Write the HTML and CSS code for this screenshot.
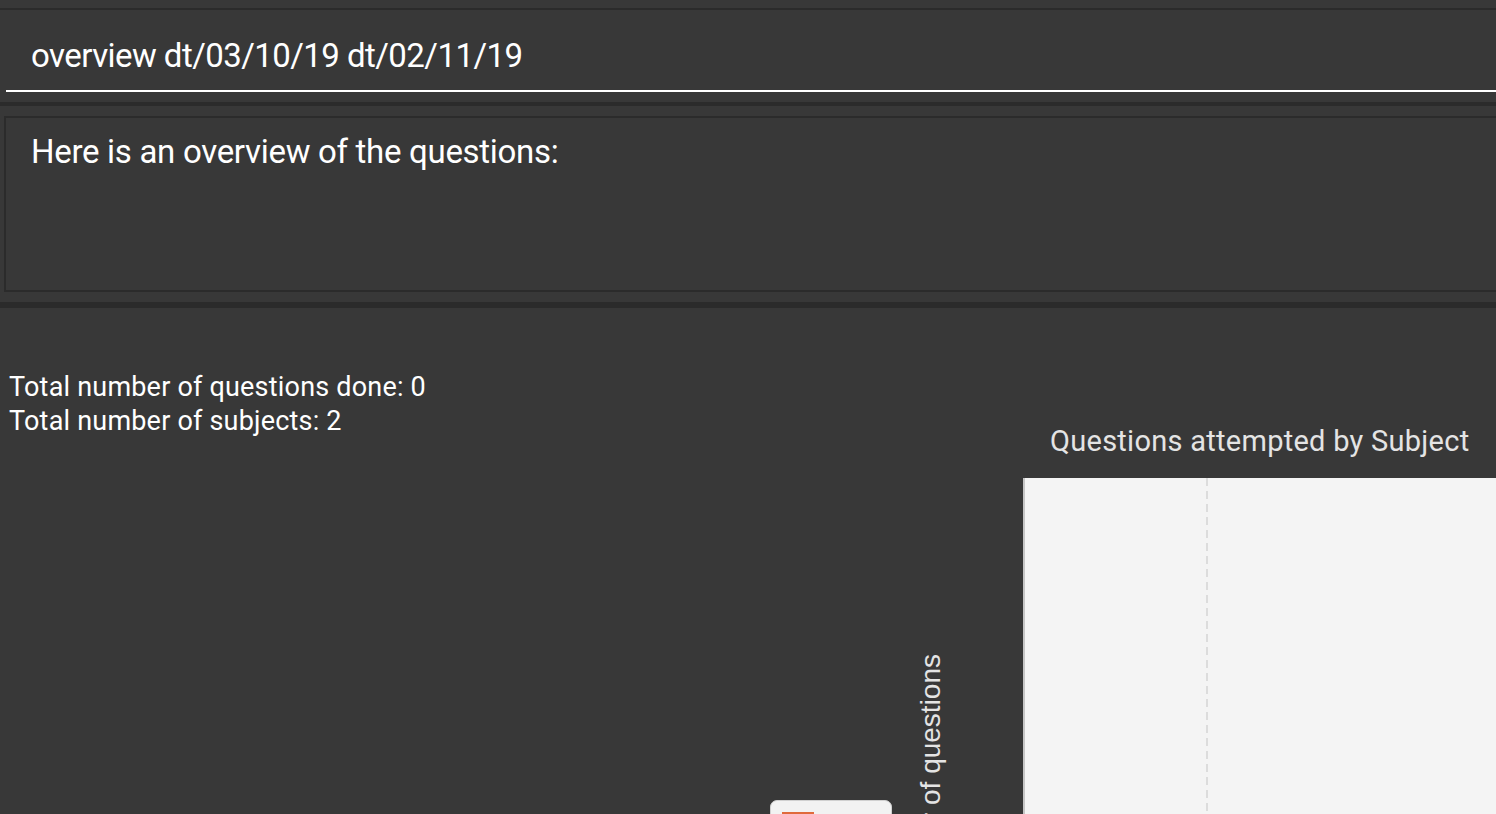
FILE: index.html
```html
<!DOCTYPE html>
<html>
<head>
<meta charset="utf-8">
<link rel="stylesheet" href="styles.css">
</head>
<body>
<div class="app">
  <div class="top-band"></div>
  <div class="command">
    <div class="command-text">overview dt/03/10/19 dt/02/11/19</div>
    <div class="command-line"></div>
  </div>
  <div class="sep"></div>
  <div class="result-wrap">
    <div class="result-box">Here is an overview of the questions:</div>
  </div>
  <div class="sep sep-b"></div>
  <div class="main">
    <div class="stats">
      <div>Total number of questions done: 0</div>
      <div>Total number of subjects: 2</div>
    </div>
    <div class="chart">
      <div class="chart-title">Questions attempted by Subject</div>
      <div class="plot"><div class="grid-dash"></div></div>
      <div class="y-label">Number of questions</div>
      <div class="legend"><span class="swatch"></span></div>
    </div>
  </div>
</div>
</body>
</html>
```
FILE: styles.css
```css
html, body {
  margin: 0;
  padding: 0;
  background: #383838;
  overflow: hidden;
}
.app {
  width: 1496px;
  height: 814px;
  display: flex;
  flex-direction: column;
  font-family: Roboto, "Liberation Sans", sans-serif;
  color: #ffffff;
  overflow: hidden;
}
.top-band {
  height: 8px;
  border-bottom: 2px solid #2b2b2b;
  flex: none;
}
.command {
  flex: none;
  height: 82px;
  display: flex;
  flex-direction: column;
}
.command-text {
  padding-left: 31px;
  font-size: 33px;
  letter-spacing: -0.55px;
  line-height: 92px;
  height: 80px;
  box-sizing: border-box;
  white-space: nowrap;
}
.command-line {
  margin-left: 6px;
  height: 2px;
  background: #ffffff;
}
.sep {
  flex: none;
  margin-top: 10px;
  height: 4px;
  background: #2b2b2b;
}
.result-wrap {
  flex: none;
  padding: 10px 0 0 4px;
}
.result-box {
  height: 158px;
  margin-right: -10px;
  border: 2px solid #2b2b2b;
  padding: 14px 0 0 25px;
  font-size: 33px;
  letter-spacing: -0.3px;
  line-height: 40px;
  box-sizing: content-box;
  white-space: nowrap;
}
.sep-b {
  height: 6px;
}
.main {
  flex: 1;
  display: flex;
  position: relative;
}
.stats {
  flex: none;
  padding: 62px 0 0 9px;
  font-size: 27px;
  letter-spacing: 0.2px;
  line-height: 34px;
  width: 700px;
  white-space: nowrap;
}
.chart {
  flex: 1;
  position: relative;
}
.chart-title {
  position: absolute;
  left: 341px;
  top: 116px;
  font-size: 29px;
  letter-spacing: 0.27px;
  color: #e4e4e4;
  white-space: nowrap;
}
.plot {
  position: absolute;
  left: 314px;
  top: 170px;
  right: 0;
  bottom: 0;
  background: #f4f4f4;
  border-left: 2px solid #c6c6c6;
}
.grid-dash {
  position: absolute;
  left: 181px;
  top: 0;
  bottom: 0;
  width: 2px;
  background: repeating-linear-gradient(to bottom, #dcdcdc 0 8px, transparent 8px 13px);
}
.y-label {
  position: absolute;
  left: 206px;
  top: 346px;
  transform-origin: 0 0;
  transform: rotate(-90deg) translateX(-100%);
  font-family: "Liberation Sans", Arial, sans-serif;
  font-size: 28px;
  color: #e4e4e4;
  white-space: nowrap;
}
.legend {
  position: absolute;
  left: 61px;
  top: 492px;
  width: 120px;
  height: 40px;
  background: #f2f2f2;
  border: 1px solid #d0d0d0;
  border-radius: 7px;
}
.swatch {
  position: absolute;
  left: 11px;
  top: 11px;
  width: 32px;
  height: 14px;
  background: #e06a3c;
}
```
